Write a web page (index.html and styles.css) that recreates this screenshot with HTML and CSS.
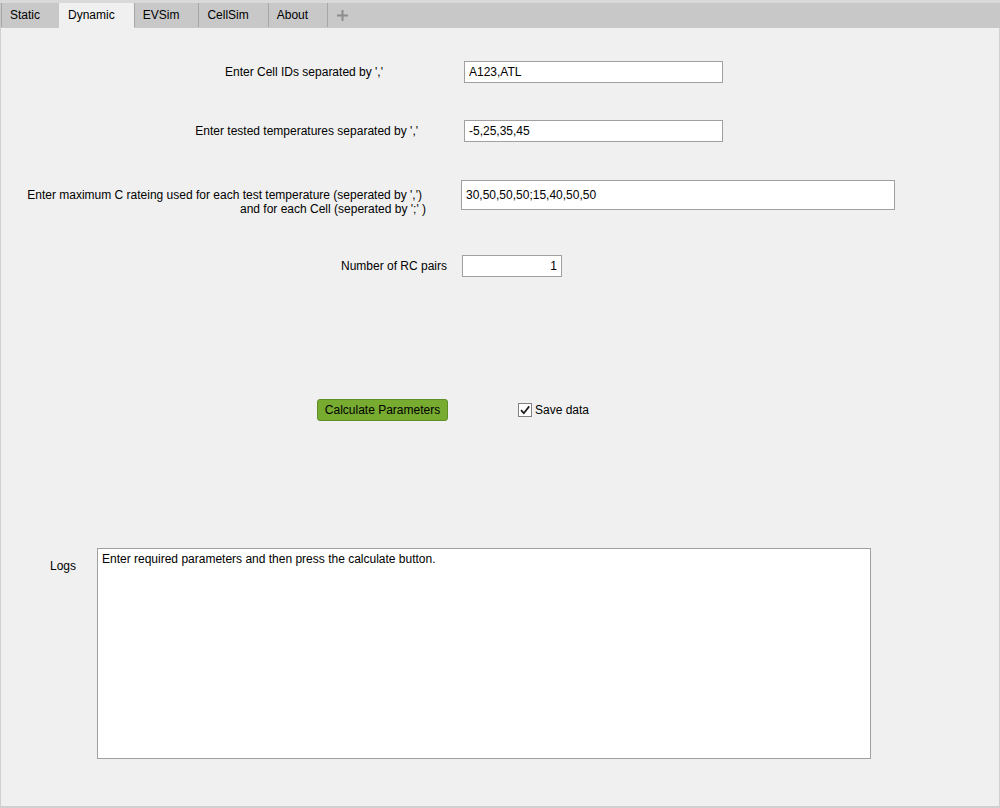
FILE: index.html
```html
<!DOCTYPE html>
<html lang="en">
<head>
    <meta charset="UTF-8">
    <title>Dynamic</title>
    <link rel="stylesheet" href="styles.css">
</head>
<body>
    <div class="window">
        <div class="tabbar">
            <div class="tab">Static</div>
            <div class="tab active">Dynamic</div>
            <div class="tab">EVSim</div>
            <div class="tab">CellSim</div>
            <div class="tab">About</div>
            <div class="tab-add">
                <svg width="11" height="11" viewBox="0 0 11 11"><path d="M5.5 0v11M0 5.5h11" stroke="#8c8c8c" stroke-width="2"/></svg>
            </div>
        </div>

        <div class="panel">
            <div class="row row-ids">
                <label class="label" for="cell_ids">Enter Cell IDs separated by ','</label>
                <input class="field" type="text" id="cell_ids" value="A123,ATL">
            </div>

            <div class="row row-temps">
                <label class="label" for="temps">Enter tested temperatures separated by ','</label>
                <input class="field" type="text" id="temps" value="-5,25,35,45">
            </div>

            <div class="row row-crate">
                <label class="label" for="crate">
                    <span class="line first">Enter maximum C rateing used for each test temperature (seperated by ',')</span>
                    <span class="line">and for each Cell (seperated by ';' )</span>
                </label>
                <input class="field" type="text" id="crate" value="30,50,50,50;15,40,50,50">
            </div>

            <div class="row row-rc">
                <label class="label" for="rc_pairs">Number of RC pairs</label>
                <input class="field num" type="text" id="rc_pairs" value="1">
            </div>

            <div class="row row-actions">
                <button class="btn-calc" type="button">Calculate Parameters</button>
                <label class="check">
                    <span class="box">
                        <svg width="12" height="12" viewBox="0 0 12 12"><path d="M2 6.2l2.8 3L10.2 2.4" fill="none" stroke="#1a1a1a" stroke-width="1.7"/></svg>
                    </span>
                    Save data
                </label>
            </div>

            <div class="row row-logs">
                <div class="logs-label">Logs</div>
                <textarea class="logs" readonly>Enter required parameters and then press the calculate button.</textarea>
            </div>
        </div>
    </div>
</body>
</html>
```

FILE: styles.css
```css
* { box-sizing: border-box; }
body { margin: 0; font-family: "Liberation Sans", Arial, sans-serif; font-size: 12px; color: #000; background-color: #f0f0f0; }
.window { width: 1000px; height: 808px; background-color: #d9d9d9; padding-top: 3px; }

/* barra de abas */
.tabbar { display: flex; height: 25px; background-color: #c8c8c8; border-bottom: 1px solid #c8c8c8; }
.tab { height: 24px; line-height: 24px; padding: 0 19px 0 8px; border-left: 1px solid #a6a6a6; white-space: nowrap; }
.tab:first-child { margin-left: 1px; }
.tab.active { background-color: #f0f0f0; height: 25px; border-left-color: #f0f0f0; }
.tab.active + .tab { border-left-color: #a6a6a6; }
.tab-add { height: 24px; border-left: 1px solid #a6a6a6; padding: 7px 0 0 9px; }

.panel { height: 780px; background-color: #f0f0f0; border-left: 1px solid #d0d0d0; border-right: 1px solid #d0d0d0; border-bottom: 2px solid #d0d0d0; padding-top: 33px; }

.row { display: flex; align-items: center; }
.label { flex: none; text-align: right; }
.field { flex: none; height: 22px; border: 1px solid #a0a0a0; background-color: #fff; padding: 0 4px; font-family: inherit; font-size: 12px; color: #000; outline: none; }
.field.num { text-align: right; padding-right: 4px; }

.row-ids .label { width: 382px; }
.row-ids .field { margin-left: 81px; width: 259px; }

.row-temps { margin-top: 37px; }
.row-temps .label { width: 417px; }
.row-temps .field { margin-left: 46px; width: 259px; }

.row-crate { margin-top: 38px; align-items: flex-start; height: 36px; }
.row-crate .label { width: 425px; margin-top: 8px; line-height: 14px; }
.row-crate .line { display: block; }
.row-crate .line.first { padding-right: 4px; }
.row-crate .field { margin-left: 35px; width: 434px; height: 30px; }

.row-rc { margin-top: 39px; }
.row-rc .label { width: 446px; }
.row-rc .field { margin-left: 15px; width: 100px; }

.row-actions { margin-top: 122px; height: 22px; }
.btn-calc { margin-left: 316px; width: 131px; height: 22px; background-color: #77ac30; border: 1px solid #5f8d26; border-radius: 3px; font-family: inherit; font-size: 12px; color: #000; padding: 0; cursor: pointer; }
.check { display: flex; align-items: center; margin-left: 70px; }
.check .box { width: 14px; height: 14px; border: 1px solid #808080; background-color: #fff; margin-right: 3px; display: flex; align-items: center; justify-content: center; }

.row-logs { margin-top: 127px; align-items: flex-start; }
.logs-label { margin-left: 49px; margin-top: 11px; width: 47px; }
.logs { width: 774px; height: 211px; border: 1px solid #a0a0a0; background-color: #fff; resize: none; padding: 3px 4px; font-family: inherit; font-size: 12px; color: #000; outline: none; }
```
